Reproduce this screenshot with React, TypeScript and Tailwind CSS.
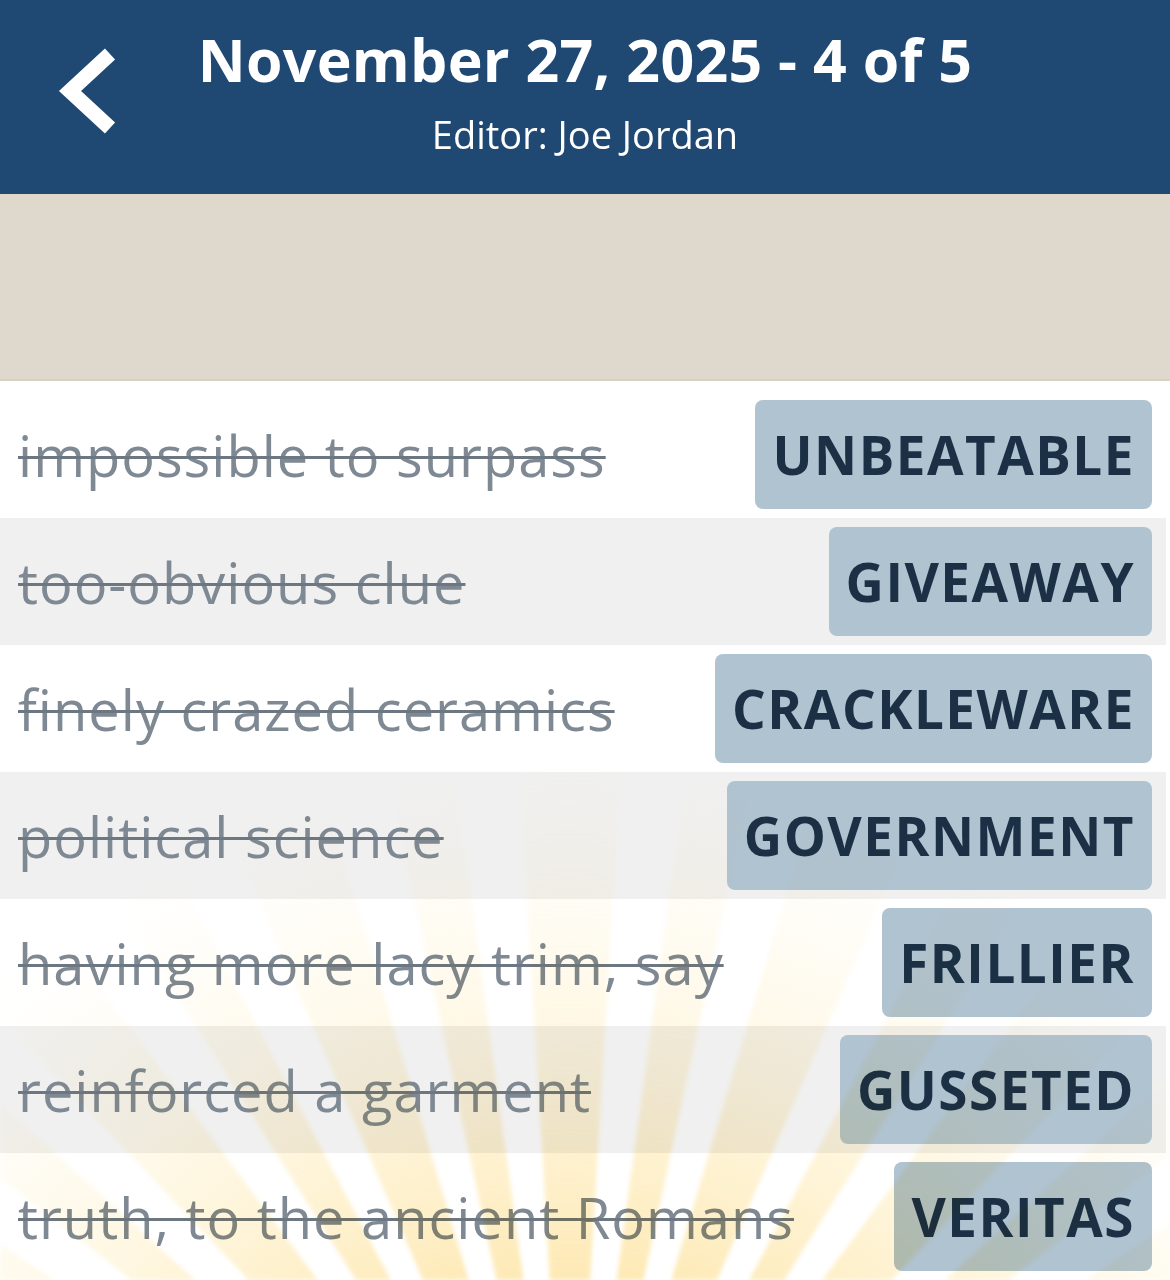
import React from 'react';

const clues = [
  { clue: 'impossible to surpass', answer: 'UNBEATABLE' },
  { clue: 'too-obvious clue', answer: 'GIVEAWAY' },
  { clue: 'finely crazed ceramics', answer: 'CRACKLEWARE' },
  { clue: 'political science', answer: 'GOVERNMENT' },
  { clue: 'having more lacy trim, say', answer: 'FRILLIER' },
  { clue: 'reinforced a garment', answer: 'GUSSETED' },
  { clue: 'truth, to the ancient Romans', answer: 'VERITAS' },
];

// sunburst wedges, centre below the bottom edge
const cx = 570;
const cy = 900;
const rays = Array.from({ length: 17 }, (_, i) => {
  const a = (-80 + i * 10) * (Math.PI / 180);
  const w = (i % 2 === 0 ? 3.4 : 2.2) * (Math.PI / 180);
  const r = 1400;
  const p1 = [cx + Math.sin(a - w) * r, cy - Math.cos(a - w) * r];
  const p2 = [cx + Math.sin(a + w) * r, cy - Math.cos(a + w) * r];
  return `${cx},${cy} ${p1[0].toFixed(1)},${p1[1].toFixed(1)} ${p2[0].toFixed(1)},${p2[1].toFixed(1)}`;
});

function Sunburst() {
  return (
    <svg className="pointer-events-none absolute bottom-0 left-0 mix-blend-multiply blur-[2px]" width="1170" height="560" viewBox="0 0 1170 560">
      <defs>
        <radialGradient id="glow" cx={cx} cy={cy} r="860" gradientUnits="userSpaceOnUse">
          <stop offset="0.4" stopColor="#fcd46c" stopOpacity="0.5" />
          <stop offset="0.7" stopColor="#fde6a4" stopOpacity="0.28" />
          <stop offset="1" stopColor="#fff3d0" stopOpacity="0" />
        </radialGradient>
      </defs>
      {rays.map((pts, i) => (
        <polygon key={i} points={pts} fill="url(#glow)" />
      ))}
    </svg>
  );
}

export default function App() {
  return (
    <div
      className="relative w-[1170px] h-[1280px] overflow-hidden bg-white [font-variant-ligatures:none]"
      style={{ fontFamily: '"Open Sans", "Noto Sans", sans-serif' }}
    >
      <header className="h-[194px] bg-[#1f4872] grid grid-cols-[1fr_auto_1fr] items-start">
        <button className="ml-[56px] mt-[44px] w-[70px] h-[92px] flex items-center justify-center">
          <svg width="70" height="92" viewBox="0 0 70 92">
            <polyline points="54,10 14,47 54,84" fill="none" stroke="#fff" strokeWidth="15" strokeLinejoin="miter" />
          </svg>
        </button>
        <div className="flex flex-col items-center text-white">
          <h1 className="mt-[19px] text-[59px] leading-[80px] font-bold tracking-[0.3px]">November 27, 2025 - 4 of 5</h1>
          <p className="mt-[13px] text-[38px] leading-[44px]">Editor: Joe Jordan</p>
        </div>
        <div />
      </header>

      <div className="h-[187px] bg-[#dfd9cd] border-b-2 border-[#d8d2c4]" />

      <div className="pt-[10px] w-[1166px]">
        {clues.map((c, i) => (
          <div
            key={c.answer}
            className={`h-[127px] flex items-center justify-between pl-[18px] pr-[14px] ${i % 2 === 1 ? 'bg-[#f0f0f0]' : 'bg-white'}`}
          >
            <span className="text-[56px] tracking-[1px] text-[#7f8993] line-through decoration-[#6d7782] decoration-[3px] whitespace-nowrap">
              {c.clue}
            </span>
            <span className="h-[109px] px-[17px] flex items-center rounded-lg bg-[#b0c3d1] text-[#1c3045] text-[53px] font-bold tracking-[1.5px]">
              {c.answer}
            </span>
          </div>
        ))}
      </div>

      <Sunburst />
    </div>
  );
}
